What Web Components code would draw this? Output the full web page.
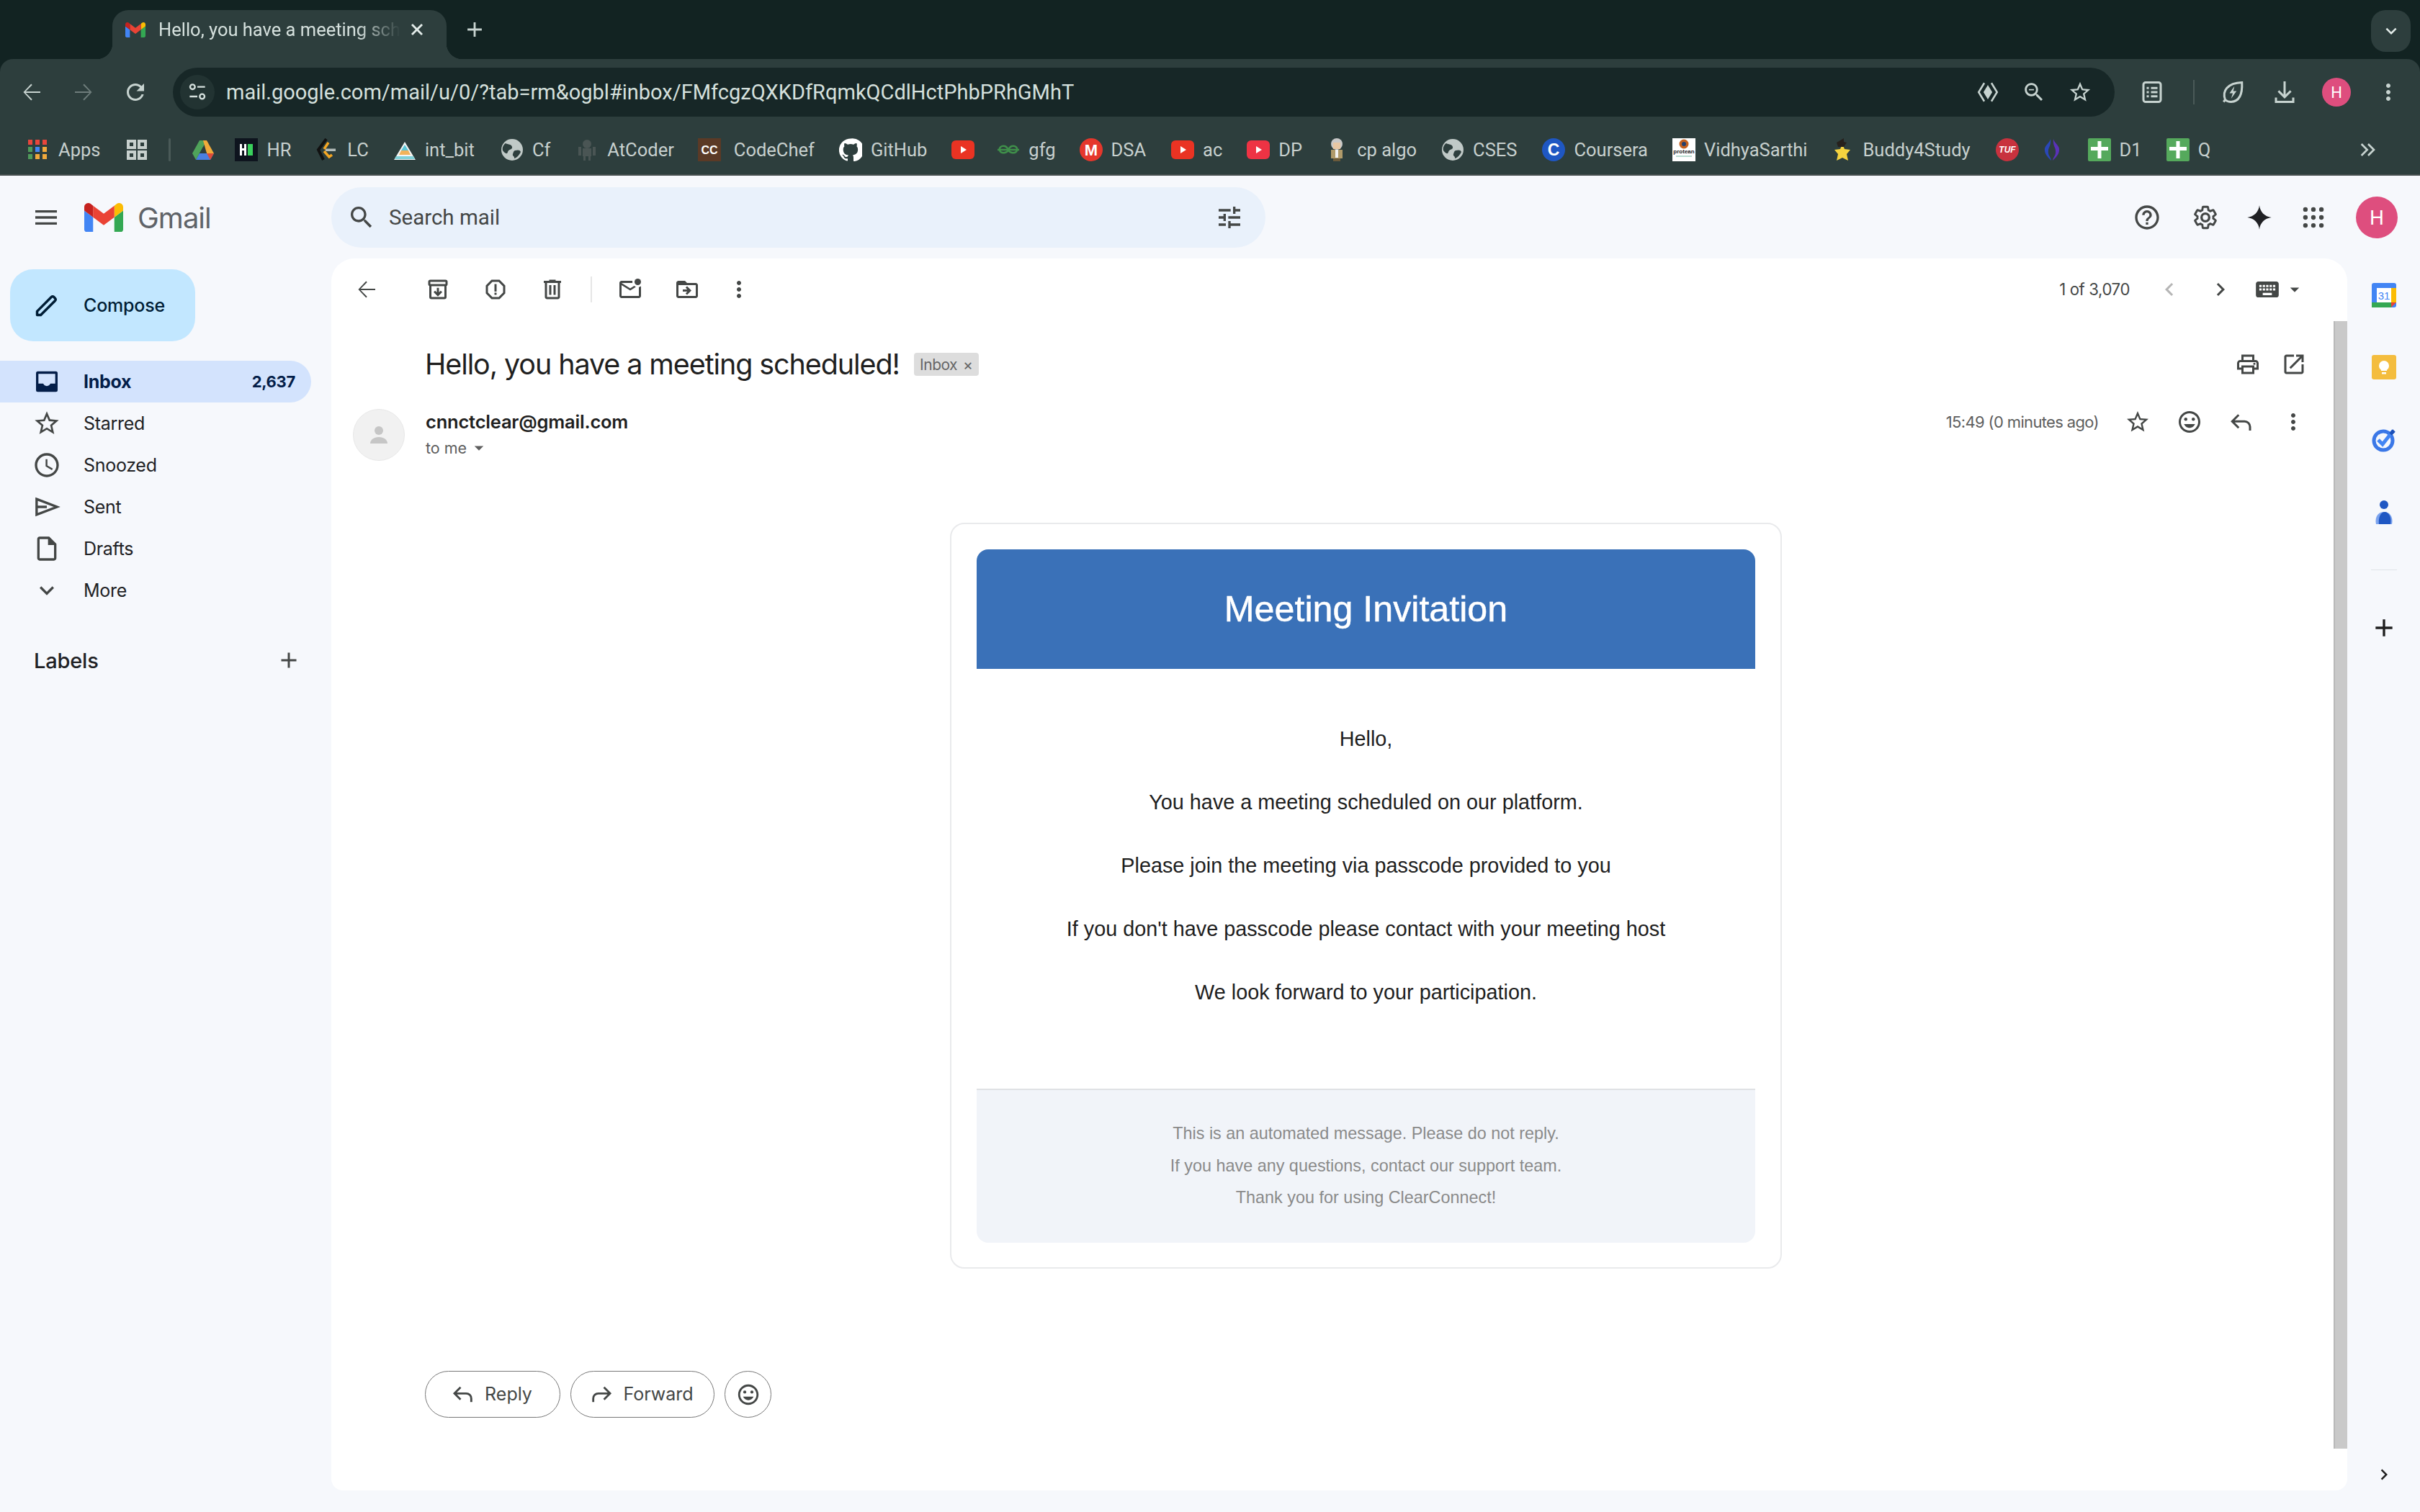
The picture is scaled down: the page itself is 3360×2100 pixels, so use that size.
<!DOCTYPE html>
<html lang="en">
<head>
<meta charset="utf-8">
<title>Gmail</title>
<style>
    html, body{ margin: 0; padding: 0; height: 100%; }
    body{ width: 3360px; height: 2100px; overflow: hidden; font-family: Roboto, "Liberation Sans", sans-serif; background: #f6f8fc; }
</style>
</head>
<body>
<chrome-frame></chrome-frame>
<gm-app></gm-app>

<script>
const ICONS = {
    back: '<path d="M20 11.300H6.500l6-6-1-1L4.300 12l7.200 7.700 1-1-6-6H20z"/>',
    forward: '<path d="M4 11.300h13.500l-6-6 1-1 7.200 7.700-7.200 7.700-1-1 6-6H4z"/>',
    refresh: '<path d="M17.650 6.350C16.200 4.900 14.210 4 12 4c-4.420 0-7.990 3.580-7.990 8s3.570 8 7.990 8c3.730 0 6.840-2.550 7.730-6h-2.080c-.82 2.330-3.040 4-5.650 4-3.310 0-6-2.690-6-6s2.690-6 6-6c1.660 0 3.140.69 4.220 1.780L13 11h7V4l-2.350 2.350z"/>',
    star: '<path d="M22 9.240l-7.190-.62L12 2 9.190 8.630 2 9.240l5.460 4.730L5.820 21 12 17.270 18.180 21l-1.630-7.030L22 9.240zM12 15.400l-3.760 2.270 1-4.280-3.320-2.880 4.380-.38L12 6.100l1.710 4.040 4.380.38-3.320 2.880 1 4.280L12 15.400z"/>',
    menu: '<path d="M3 18h18v-2H3v2zm0-5h18v-2H3v2zm0-7v2h18V6H3z"/>',
    search: '<path d="M15.500 14h-.79l-.28-.27C15.410 12.590 16 11.110 16 9.500 16 5.910 13.090 3 9.500 3S3 5.910 3 9.500 5.910 16 9.500 16c1.610 0 3.090-.59 4.230-1.570l.27.28v.79l5 4.990L20.490 19l-4.990-5zm-6 0C7.010 14 5 11.990 5 9.500S7.010 5 9.500 5 14 7.010 14 9.500 11.990 14 9.500 14z"/>',
    tune: '<path d="M3 17v2h6v-2H3zM3 5v2h10V5H3zm10 16v-2h8v-2h-8v-2h-2v6h2zM7 9v2H3v2h4v2h2V9H7zm14 4v-2H11v2h10zm-6-4h2V7h4V5h-4V3h-2v6z"/>',
    help: '<path d="M11 18h2v-2h-2v2zm1-16C6.480 2 2 6.480 2 12s4.480 10 10 10 10-4.480 10-10S17.520 2 12 2zm0 18c-4.410 0-8-3.590-8-8s3.590-8 8-8 8 3.590 8 8-3.590 8-8 8zm0-14c-2.210 0-4 1.790-4 4h2c0-1.100.9-2 2-2s2 .9 2 2c0 2-3 1.750-3 5h2c0-2.250 3-2.500 3-5 0-2.210-1.790-4-4-4z"/>',
    gear: '<g fill="none" stroke="currentColor" stroke-width="2"><path transform="translate(1.400 1.400) scale(.883)" d="M19.430 12.980c.04-.32.07-.64.07-.98s-.03-.66-.07-.98l2.110-1.650c.19-.15.24-.42.12-.64l-2-3.460c-.12-.22-.39-.3-.61-.22l-2.490 1c-.52-.4-1.080-.73-1.690-.98l-.38-2.650C14.460 2.180 14.250 2 14 2h-4c-.25 0-.46.18-.49.42l-.38 2.650c-.61.25-1.170.59-1.690.98l-2.490-1c-.23-.09-.49 0-.61.22l-2 3.460c-.13.22-.07.49.12.64l2.110 1.650c-.04.32-.07.65-.07.98s.03.66.07.98l-2.110 1.650c-.19.15-.24.42-.12.64l2 3.460c.12.22.39.3.61.22l2.490-1c.52.4 1.080.73 1.690.98l.38 2.650c.03.24.24.42.49.42h4c.25 0 .46-.18.49-.42l.38-2.650c.61-.25 1.170-.59 1.690-.98l2.490 1c.23.09.49 0 .61-.22l2-3.460c.12-.22.07-.49-.12-.64l-2.110-1.650z"/><circle cx="12" cy="12" r="3.200"/></g>',
    spark: '<path d="M12 2c.6 5.500 4.500 9.400 10 10-5.500.6-9.400 4.500-10 10-.6-5.500-4.500-9.400-10-10 5.500-.6 9.400-4.500 10-10z"/>',
    apps: '<g><circle cx="5" cy="5" r="2"/><circle cx="12" cy="5" r="2"/><circle cx="19" cy="5" r="2"/><circle cx="5" cy="12" r="2"/><circle cx="12" cy="12" r="2"/><circle cx="19" cy="12" r="2"/><circle cx="5" cy="19" r="2"/><circle cx="12" cy="19" r="2"/><circle cx="19" cy="19" r="2"/></g>',
    archive: '<g fill="none" stroke="currentColor" stroke-width="2"><path d="M5 8v11a1 1 0 0 0 1 1h12a1 1 0 0 0 1-1V8"/><rect x="4" y="4" width="16" height="4" rx="1"/></g><path d="M11 10.500h2v4.200l1.600-1.600 1.400 1.400-4 4-4-4 1.400-1.400 1.600 1.600z"/>',
    report: '<path d="M15.730 3H8.270L3 8.270v7.460L8.270 21h7.460L21 15.730V8.270L15.730 3zM19 14.900L14.900 19H9.100L5 14.900V9.100L9.100 5h5.800L19 9.100v5.800z"/><path d="M11 7h2v7h-2zM11 15h2v2h-2z"/>',
    trash: '<path d="M15 4V3H9v1H4v2h1v13c0 1.100.9 2 2 2h10c1.100 0 2-.9 2-2V6h1V4h-5zm2 15H7V6h10v13zM9 8h2v9H9zm4 0h2v9h-2z"/>',
    unread: '<path d="M22 8.980V18c0 1.100-.9 2-2 2H4c-1.100 0-2-.9-2-2V6c0-1.100.9-2 2-2h10.100c-.06.32-.1.66-.1 1s.04.68.1 1H4l8 5 3.670-2.290c.47.43 1.020.76 1.630.98L12 13 4 8v10h16V9.900c.74-.15 1.420-.48 2-.92z"/><circle cx="19" cy="5" r="3"/>',
    folder: '<path d="M20 6h-8l-2-2H4c-1.100 0-2 .9-2 2v12c0 1.100.9 2 2 2h16c1.100 0 2-.9 2-2V8c0-1.100-.9-2-2-2zm0 12H4V8h16v10zm-8.010-9l-1.410 1.410L12.160 12H8v2h4.160l-1.590 1.590L11.990 17 16 13.010 11.990 9z"/>',
    dots: '<path d="M12 8c1.100 0 2-.9 2-2s-.9-2-2-2-2 .9-2 2 .9 2 2 2zm0 2c-1.100 0-2 .9-2 2s.9 2 2 2 2-.9 2-2-.9-2-2-2zm0 6c-1.100 0-2 .9-2 2s.9 2 2 2 2-.9 2-2-.9-2-2-2z"/>',
    prev: '<path d="M15.410 7.410L14 6l-6 6 6 6 1.410-1.410L10.830 12z"/>',
    next: '<path d="M10 6L8.590 7.410 13.170 12l-4.580 4.590L10 18l6-6z"/>',
    keyboard: '<path d="M20 5H4c-1.100 0-1.990.9-1.990 2L2 17c0 1.100.9 2 2 2h16c1.100 0 2-.9 2-2V7c0-1.100-.9-2-2-2zm-9 3h2v2h-2V8zm0 3h2v2h-2v-2zM8 8h2v2H8V8zm0 3h2v2H8v-2zm-1 2H5v-2h2v2zm0-3H5V8h2v2zm9 7H8v-2h8v2zm0-4h-2v-2h2v2zm0-3h-2V8h2v2zm3 3h-2v-2h2v2zm0-3h-2V8h2v2z"/>',
    caret: '<path d="M7 10l5 5 5-5z"/>',
    print: '<path d="M19 8h-1V3H6v5H5c-1.660 0-3 1.340-3 3v6h4v4h12v-4h4v-6c0-1.660-1.340-3-3-3zM8 5h8v3H8V5zm8 12v2H8v-4h8v2zm2-2v-2H6v2H4v-4c0-.55.45-1 1-1h14c.55 0 1 .45 1 1v4h-2z"/><circle cx="18" cy="11.500" r="1"/>',
    external: '<path d="M19 19H5V5h7V3H5c-1.110 0-2 .9-2 2v14c0 1.100.89 2 2 2h14c1.100 0 2-.9 2-2v-7h-2v7zM14 3v2h3.590l-9.830 9.830 1.410 1.410L19 6.410V10h2V3h-7z"/>',
    smile: '<path d="M11.990 2C6.470 2 2 6.480 2 12s4.470 10 9.990 10C17.520 22 22 17.520 22 12S17.520 2 11.990 2zM12 20c-4.420 0-8-3.580-8-8s3.580-8 8-8 8 3.580 8 8-3.580 8-8 8z"/><circle cx="8.500" cy="9.500" r="1.500"/><circle cx="15.500" cy="9.500" r="1.500"/><path d="M12 17.500c2.330 0 4.310-1.460 5.110-3.500H6.890c.8 2.040 2.780 3.500 5.110 3.500z"/>',
    reply: '<path fill="none" stroke="currentColor" stroke-width="2" d="M9.500 5.500L3.500 11.500l6 6M3.500 11.500H15a5 5 0 0 1 5 5V20"/>',
    fwd: '<path fill="none" stroke="currentColor" stroke-width="2" d="M14.500 5.500l6 6-6 6M20.500 11.500H9a5 5 0 0 0-5 5V20"/>',
    inbox: '<rect x="3" y="3.500" width="18" height="17" rx="1.500" fill="#041e49"/><path d="M5 5.500h14v8.200h-4c-.5 1.200-1.700 2-3 2s-2.500-.8-3-2H5z" fill="#d3e3fd"/>',
    clock: '<path d="M11.990 2C6.470 2 2 6.480 2 12s4.470 10 9.990 10C17.520 22 22 17.520 22 12S17.520 2 11.990 2zM12 20c-4.420 0-8-3.580-8-8s3.580-8 8-8 8 3.580 8 8-3.580 8-8 8z"/><path d="M12.500 7H11v6l5.250 3.150.75-1.230-4.500-2.670z"/>',
    sent: '<path fill="none" stroke="currentColor" stroke-width="2" d="M3.500 5.500L20.500 12 3.500 18.500zM3.500 12H12"/>',
    draft: '<path d="M14 2H6c-1.100 0-1.990.9-1.990 2L4 20c0 1.100.89 2 1.990 2H18c1.100 0 2-.9 2-2V8l-6-6zM6 20V4h7v5h5v11H6z"/>',
    more: '<path d="M16.590 8.590L12 13.170 7.410 8.590 6 10l6 6 6-6z"/>',
    plus: '<path d="M19 13h-6v6h-2v-6H5v-2h6V5h2v6h6v2z"/>',
    pen: '<path fill="none" stroke="currentColor" stroke-width="2.200" stroke-linejoin="round" d="M3.500 20.500v-3.200L16 4.800a1.600 1.600 0 0 1 2.200 0l1 1a1.600 1.600 0 0 1 0 2.200L6.700 20.500z"/>',
    person: '<circle cx="12" cy="8" r="4"/><path d="M4 20c0-3.500 3.500-6 8-6s8 2.500 8 6z"/>',
    lens: '<path d="M8.500 3L3 12l5.500 9M15.500 3L21 12l-5.500 9" fill="none" stroke="currentColor" stroke-width="1.800"/><path d="M12 5l4.300 7-4.300 7-4.300-7z"/>',
    zoomout: '<path d="M15.500 14h-.79l-.28-.27C15.410 12.590 16 11.110 16 9.500 16 5.910 13.090 3 9.500 3S3 5.910 3 9.500 5.910 16 9.500 16c1.610 0 3.090-.59 4.230-1.570l.27.28v.79l5 4.990L20.490 19l-4.990-5zm-6 0C7.010 14 5 11.990 5 9.500S7.010 5 9.500 5 14 7.010 14 9.500 11.990 14 9.500 14z"/><path d="M7 9h5v1.200H7z"/>',
    reading: '<rect x="4" y="3" width="16" height="18" rx="2" fill="none" stroke="currentColor" stroke-width="2"/><path d="M7 7.200h2v2H7zM11 7.200h6v2h-6zM7 11h2v2H7zM11 11h6v2h-6zM7 14.800h2v2H7zM11 14.800h6v2h-6z"/>',
    leaf: '<path fill="none" stroke="currentColor" stroke-width="2" d="M5 19C2 11 7 3.500 20.500 3c.5 9-1.500 17.500-10 18-2.200 0-4-.5-5.500-2zM5 19l-1.500 2"/><path d="M13.500 6.500L9 13h3l-1.500 5 5-7h-3z"/>',
    download: '<path d="M11 2h2v12.200l4-4 1.400 1.400L12 18l-6.400-6.400L7 10.200l4 4z"/><path d="M3 17h2v3h14v-3h2v5H3z"/>',
    tabopts: '<circle cx="7" cy="6.500" r="2.500" fill="none" stroke="currentColor" stroke-width="1.800"/><path d="M12 5.600h8v1.800h-8zM4 15.600h8v1.800H4z"/><circle cx="17" cy="16.500" r="2.500" fill="none" stroke="currentColor" stroke-width="1.800"/>',
    chevrons: '<path fill="none" stroke="currentColor" stroke-width="2" d="M5 6l6 6-6 6M12 6l6 6-6 6"/>'
};

class GmIcon extends HTMLElement{
    constructor(){
        super();
        this.attachShadow({mode: 'open'});
    }
    connectedCallback(){
        const size = this.getAttribute('size') || 40;
        const name = this.getAttribute('name');
        this.shadowRoot.innerHTML = `
            <style>
                :host{ display: inline-flex; width: ${size}px; height: ${size}px; flex: none; color: inherit; }
                svg{ width: 100%; height: 100%; display: block; fill: currentColor; }
            </style>
            <svg viewBox="0 0 24 24">${ICONS[name] || ''}</svg>
        `;
    }
}
customElements.define('gm-icon', GmIcon);

class GmailM extends HTMLElement{
    constructor(){
        super();
        this.attachShadow({mode: 'open'});
    }
    connectedCallback(){
        const w = this.getAttribute('width') || 54;
        this.shadowRoot.innerHTML = `
            <style>:host{ display: inline-flex; flex: none; } svg{ display: block; width: ${w}px; }</style>
            <svg viewBox="52 42 88 66">
                <path fill="#4285f4" d="M58 108h14V74L52 59v43c0 3.320 2.690 6 6 6"/>
                <path fill="#34a853" d="M120 108h14c3.320 0 6-2.690 6-6V59l-20 15"/>
                <path fill="#fbbc04" d="M120 48v26l20-15v-8c0-7.420-8.470-11.650-14.400-7.200"/>
                <path fill="#ea4335" d="M72 74V48l24 18 24-18v26L96 92"/>
                <path fill="#c5221f" d="M52 51v8l20 15V48l-5.600-4.200c-5.940-4.450-14.400-.22-14.400 7.200"/>
            </svg>
        `;
    }
}
customElements.define('gmail-m', GmailM);

// bookmark favicons, all on a 32 box
const FAVICONS = {
    apps: '<g><rect x="3" y="2" width="6" height="7" fill="#e8453c"/><rect x="13" y="2" width="6" height="7" fill="#e8453c"/><rect x="23" y="2" width="6" height="7" fill="#e8453c"/><rect x="3" y="12" width="6" height="7" fill="#4f9a5a"/><rect x="13" y="12" width="6" height="7" fill="#4285f4"/><rect x="23" y="12" width="6" height="7" fill="#f0a93c"/><rect x="3" y="22" width="6" height="7" fill="#4f9a5a"/><rect x="13" y="22" width="6" height="7" fill="#f0a93c"/><rect x="23" y="22" width="6" height="7" fill="#f0a93c"/></g>',
    grid: '<g fill="none" stroke="#c7d0ce" stroke-width="4"><rect x="4" y="4" width="9" height="9"/><rect x="19" y="4" width="9" height="9"/><rect x="4" y="19" width="9" height="9"/><rect x="19" y="19" width="9" height="9"/></g>',
    drive: '<path d="M1 21L11 3h5l5 0-5 9-10 18z" fill="#4fa35a"/><path d="M16 3h5l10 18H21z" fill="#f0ab3a"/><path d="M11 21h20l-5 9H6z" fill="#4a7fe0"/><path d="M21 21h10l-5 9z" fill="#dd4b39"/><path d="M16 12l5 9H11z" fill="#2d3e3d"/>',
    hr: '<rect width="32" height="32" fill="#0e141e"/><path d="M7 8h3v6h3V8h3v16h-3v-7h-3v7H7z" fill="#fff"/><rect x="18" y="8" width="7" height="16" fill="#39d05c"/>',
    lc: '<path d="M15 1L4 16l7 14" fill="none" stroke="#111" stroke-width="4"/><path d="M18 6l-6 9M12 18l7 8 4-3" fill="none" stroke="#f5a623" stroke-width="3.500"/><rect x="14" y="14.500" width="14" height="3.500" fill="#b3bcba"/>',
    intbit: '<path d="M16 5L31 30H1z" fill="#f5f5f5"/><path d="M16 9l5 8H11z" fill="#5cc5d6"/><path d="M11 17h10l3 6H8z" fill="#f1b35a"/><path d="M4 25h24l2 4H2z" fill="#7fd0d8"/>',
    globe: '<circle cx="16" cy="16" r="15" fill="#c0c9c7"/><path d="M7 7c4 2 8 1 9 5s-5 3-6 7-4 2-7-2c-1-4 1-8 4-10zM20 17c4-1 7-1 8 2-2 4-5 8-9 9 1-3-3-3-2-6s1-4 3-5z" fill="#2d3e3d"/>',
    atcoder: '<g fill="#4a5554"><circle cx="16" cy="8" r="6"/><rect x="10" y="14" width="12" height="11"/><rect x="4" y="12" width="4" height="12"/><rect x="24" y="12" width="4" height="12"/><rect x="11" y="25" width="3" height="6"/><rect x="18" y="25" width="3" height="6"/></g>',
    cc: '<rect width="32" height="32" fill="#5b3a26"/><text x="16" y="22" font-family="Liberation Sans" font-weight="700" font-size="16" text-anchor="middle" fill="#fff">CC</text>',
    github: '<path transform="scale(1.333)" fill="#fff" d="M12 .3a12 12 0 0 0-3.800 23.400c.6.1.8-.3.8-.6v-2c-3.300.7-4-1.600-4-1.600-.6-1.400-1.400-1.800-1.400-1.800-1-.7.1-.7.1-.7 1.200.1 1.800 1.200 1.800 1.200 1 1.800 2.800 1.300 3.500 1 .1-.8.4-1.300.8-1.600-2.700-.3-5.500-1.300-5.500-6 0-1.200.5-2.300 1.300-3.100-.2-.4-.6-1.600 0-3.200 0 0 1-.3 3.400 1.200a11.500 11.500 0 0 1 6 0c2.300-1.500 3.300-1.200 3.300-1.200.6 1.600.2 2.800 0 3.200.9.8 1.300 1.900 1.300 3.200 0 4.600-2.800 5.600-5.500 5.900.5.4.9 1.200.9 2.400v3.500c0 .3.2.7.8.6A12 12 0 0 0 12 .3z"/>',
    yt: '<rect y="3" width="32" height="26" rx="6" fill="#ea3323"/><path d="M13 11l8 5-8 5z" fill="#fff"/>',
    ytp: '<rect y="3" width="32" height="26" rx="6" fill="#ee3344"/><path d="M13 11l8 5-8 5z" fill="#fff"/>',
    gfg: '<g fill="none" stroke="#3f8f4a" stroke-width="2.500"><path d="M1 16h30"/><path d="M16 16c-2 5-10 6-12 1-1-4 2-7 7-6 2 .4 3 1 5 5z"/><path d="M16 16c2 5 10 6 12 1 1-4-2-7-7-6-2 .4-3 1-5 5z"/></g>',
    dsa: '<circle cx="16" cy="16" r="16" fill="#e5372c"/><text x="16" y="24" font-family="Liberation Sans" font-weight="700" font-size="22" text-anchor="middle" fill="#fff">M</text>',
    cpalgo: '<circle cx="16" cy="8" r="8" fill="#c9c9c9"/><rect x="11" y="6" width="10" height="9" fill="#e7c7a4"/><rect x="8" y="16" width="16" height="12" fill="#b09a6a"/><rect x="14" y="16" width="4" height="11" fill="#f2f2f2"/><rect x="11" y="28" width="10" height="4" fill="#6b5a3b"/>',
    coursera: '<circle cx="16" cy="16" r="16" fill="#1f57c3"/><text x="16" y="24" font-family="Liberation Sans" font-weight="700" font-size="23" text-anchor="middle" fill="#fff">C</text>',
    protean: '<rect width="32" height="32" fill="#fff"/><circle cx="16" cy="8" r="6.500" fill="#c4611f"/><circle cx="16" cy="8" r="3" fill="#26406e"/><text x="16" y="21" font-family="Liberation Sans" font-size="8" font-weight="700" text-anchor="middle" fill="#222">protean</text><rect x="5" y="24" width="22" height="2" fill="#b8dcd0"/>',
    buddy: '<path d="M16 8l3 7 8 1-5 6 2 9-8-4-8 4 2-9-5-6 8-1z" fill="#f5d33f"/><path d="M8 6l10-6v5l4 1-4 6H10z" fill="#26201c"/>',
    tuf: '<circle cx="16" cy="16" r="16" fill="#c8323e"/><text x="16" y="20" font-family="Liberation Sans" font-weight="700" font-style="italic" font-size="12" text-anchor="middle" fill="#fff">TUF</text>',
    code: '<path d="M14 1C12 8 5 10 6 17c.5 6 5 10 9 14-1-6-5-7-4-14 0-4 4-7 3-16z" fill="#2a47b8"/><path d="M18 1c2 7 9 9 8 16-.5 6-5 10-9 14 1-6 5-7 4-14 0-4-4-7-3-16z" fill="#5a32b8"/>',
    sheet: '<rect width="32" height="32" rx="2" fill="#55a95c"/><path d="M13.500 4h5v8H28v5h-9.500v11h-5V17H4v-5h9.500z" fill="#fff"/>'
};

class BmItem extends HTMLElement{
    constructor(){
        super();
        this.attachShadow({mode: 'open'});
    }
    connectedCallback(){
        const label = this.getAttribute('label') || '';
        const icon = this.getAttribute('icon');
        const left = this.getAttribute('left') || 0;
        this.shadowRoot.innerHTML = `
            <style>
                :host{ display: flex; align-items: center; gap: 12px; flex: none; margin-left: ${left}px; height: 34px; }
                svg{ width: 32px; height: 32px; display: block; flex: none; }
                span{ font: 400 25.500px/32px Roboto, sans-serif; color: #c7d0ce; white-space: nowrap; }
            </style>
            <svg viewBox="0 0 32 32">${FAVICONS[icon] || ''}</svg>
            ${label ? `<span>${label}</span>` : ''}
        `;
    }
}
customElements.define('bm-item', BmItem);

class ChromeFrame extends HTMLElement{
    constructor(){
        super();
        this.attachShadow({mode: 'open'});
    }
    getStyle(){
        return `
            <style>
                :host{ display: block; height: 244px; background: #122322; color: #c7d3d0; font-family: Roboto, sans-serif; }
                .tabs{ height: 82px; display: flex; align-items: flex-end; padding-left: 156px; box-sizing: border-box; }
                .tab{ position: relative; width: 464px; height: 68px; background: #2d3e3d; border-radius: 22px 22px 0 0; display: flex; align-items: center; padding: 0 0 14px 18px; box-sizing: border-box; }
                .tab::before, .tab::after{ content: ''; position: absolute; bottom: 0; width: 22px; height: 22px; }
                .tab::before{ left: -22px; background: radial-gradient(circle at 0 0, #122322 22px, #2d3e3d 22.500px); }
                .tab::after{ right: -22px; background: radial-gradient(circle at 100% 0, #122322 22px, #2d3e3d 22.500px); }
                .title{ margin-left: 18px; width: 336px; flex: none; overflow: hidden; white-space: nowrap; font-size: 25.500px; color: #d5e0dd;
                    -webkit-mask-image: linear-gradient(90deg, #000 82%, transparent 100%); mask-image: linear-gradient(90deg, #000 82%, transparent 100%); }
                .tab gm-icon.x{ margin-left: 6px; color: #e3ecea; }
                .newtab{ margin: 0 0 24px 22px; color: #c7d3d0; }
                .tabs .list{ margin: 0 13px 10px auto; width: 55px; height: 58px; border-radius: 20px; background: #2d3e3d; display: flex; align-items: center; justify-content: center; color: #e3ecea; }
                .tool{ height: 90px; background: #2d3e3d; border-radius: 18px 18px 0 0; display: flex; align-items: flex-start; }
                .tool > gm-icon{ margin-top: 28px; }
                .omni{ margin: 12px 0 0 34px; width: 2696px; height: 68px; border-radius: 34px; background: #172727; display: flex; align-items: center; box-sizing: border-box; padding: 0 31px 0 10px; }
                .site{ width: 48px; height: 48px; border-radius: 50%; background: #223332; display: flex; align-items: center; justify-content: center; flex: none; color: #d5e0dd; }
                .url{ margin-left: 16px; font-size: 29px; color: #d5e0dd; white-space: nowrap; flex: 1; }
                .omni gm-icon{ margin-left: 30px; }
                .sep{ width: 2px; height: 34px; background: #4a5a58; margin: 29px 0 0 39px; }
                .avatar{ margin: 26px 0 0 34px; width: 40px; height: 40px; border-radius: 50%; background: #de4e7e; color: #fff; font-size: 22px; display: flex; align-items: center; justify-content: center; }
                .marks{ height: 72px; background: #2d3e3d; display: flex; align-items: center; padding: 2px 0 0 36px; box-sizing: border-box; border-bottom: 2px solid #474f4f; }
                .more{ margin-left: auto; margin-right: 56px; }
            </style>
        `;
    }
    getTemplate(){
        const template = document.createElement('template');
        template.innerHTML = `
            <div class="tabs">
                <div class="tab">
                    <gmail-m width="28"></gmail-m>
                    <span class="title">Hello, you have a meeting scheduled!</span>
                    <gm-icon class="x" name="plus" size="34" style="transform: rotate(45deg)"></gm-icon>
                </div>
                <gm-icon class="newtab" name="plus" size="34"></gm-icon>
                <div class="list"><gm-icon name="more" size="30"></gm-icon></div>
            </div>
            <div class="tool">
                <gm-icon name="back" size="36" style="margin-left:26px"></gm-icon>
                <gm-icon name="forward" size="36" style="margin-left:36px;color:#6e7d7b"></gm-icon>
                <gm-icon name="refresh" size="36" style="margin-left:36px"></gm-icon>
                <div class="omni">
                    <div class="site"><gm-icon name="tabopts" size="32" style="margin-left:0"></gm-icon></div>
                    <span class="url">mail.google.com/mail/u/0/?tab=rm&amp;ogbl#inbox/FMfcgzQXKDfRqmkQCdlHctPhbPRhGMhT</span>
                    <gm-icon name="lens" size="34"></gm-icon>
                    <gm-icon name="zoomout" size="34"></gm-icon>
                    <gm-icon name="star" size="34"></gm-icon>
                </div>
                <gm-icon name="reading" size="36" style="margin-left:34px"></gm-icon>
                <div class="sep"></div>
                <gm-icon name="leaf" size="36" style="margin-left:35px"></gm-icon>
                <gm-icon name="download" size="36" style="margin-left:36px"></gm-icon>
                <div class="avatar">H</div>
                <gm-icon name="dots" size="36" style="margin-left:34px"></gm-icon>
            </div>
            <div class="marks">
                <bm-item icon="apps" label="Apps" style="gap:13px"></bm-item>
                <bm-item icon="grid" left="35"></bm-item>
                <div style="width:3px;height:32px;border-radius:2px;background:#4a5a58;margin-left:28px"></div>
                <bm-item icon="drive" left="29"></bm-item>
                <bm-item icon="hr" label="HR" left="28"></bm-item>
                <bm-item icon="lc" label="LC" left="34"></bm-item>
                <bm-item icon="intbit" label="int_bit" left="34"></bm-item>
                <bm-item icon="globe" label="Cf" left="36"></bm-item>
                <bm-item icon="atcoder" label="AtCoder" left="35"></bm-item>
                <bm-item icon="cc" label="CodeChef" left="33" style="gap:18px"></bm-item>
                <bm-item icon="github" label="GitHub" left="34"></bm-item>
                <bm-item icon="yt" left="34"></bm-item>
                <bm-item icon="gfg" label="gfg" left="31"></bm-item>
                <bm-item icon="dsa" label="DSA" left="33"></bm-item>
                <bm-item icon="yt" label="ac" left="35"></bm-item>
                <bm-item icon="ytp" label="DP" left="34"></bm-item>
                <bm-item icon="cpalgo" label="cp algo" left="32"></bm-item>
                <bm-item icon="globe" label="CSES" left="34"></bm-item>
                <bm-item icon="coursera" label="Coursera" left="35"></bm-item>
                <bm-item icon="protean" label="VidhyaSarthi" left="34"></bm-item>
                <bm-item icon="buddy" label="Buddy4Study" left="33"></bm-item>
                <bm-item icon="tuf" left="35"></bm-item>
                <bm-item icon="code" left="30"></bm-item>
                <bm-item icon="sheet" label="D1" left="34"></bm-item>
                <bm-item icon="sheet" label="Q" left="34"></bm-item>
                <gm-icon class="more" name="chevrons" size="32"></gm-icon>
            </div>
            ${this.getStyle()}
        `;
        return template;
    }
    connectedCallback(){
        this.shadowRoot.appendChild(this.getTemplate().content.cloneNode(true));
    }
}
customElements.define('chrome-frame', ChromeFrame);

class NavItem extends HTMLElement{
    constructor(){
        super();
        this.attachShadow({mode: 'open'});
    }
    connectedCallback(){
        const active = this.hasAttribute('active');
        const count = this.getAttribute('count');
        this.shadowRoot.innerHTML = `
            <style>
                :host{ display: flex; align-items: center; height: 58px; width: 432px; box-sizing: border-box; padding: 0 22px 0 45px; border-radius: 0 29px 29px 0; color: #444746;
                    font: 400 25px Inter, Roboto, sans-serif; letter-spacing: -0.3px; background: ${active ? '#d3e3fd' : 'none'}; }
                .label{ margin-left: 31px; flex: 1; color: ${active ? '#041e49' : '#202124'}; font-weight: ${active ? 700 : 400}; }
                .count{ color: #041e49; font-weight: 700; font-size: 22px; }
            </style>
            <gm-icon name="${this.getAttribute('icon')}" size="40"></gm-icon>
            <span class="label"><slot></slot></span>
            ${count ? `<span class="count">${count}</span>` : ''}
        `;
    }
}
customElements.define('nav-item', NavItem);

class GmSidebar extends HTMLElement{
    constructor(){
        super();
        this.attachShadow({mode: 'open'});
    }
    connectedCallback(){
        this.shadowRoot.innerHTML = `
            <style>
                :host{ display: block; width: 460px; flex: none; }
                .compose{ margin: 15px 0 0 14px; width: 257px; height: 100px; border-radius: 32px; background: #c2e7ff; display: flex; align-items: center; padding-left: 32px; box-sizing: border-box; color: #001d35; font: 500 25px Inter, Roboto, sans-serif; letter-spacing: -0.2px; }
                .compose span{ margin-left: 32px; }
                nav{ margin-top: 27px; }
                .labels{ margin: 48px 0 0 47px; width: 372px; display: flex; align-items: center; justify-content: space-between; font: 500 29px Inter, Roboto, sans-serif; letter-spacing: -0.2px; color: #202124; height: 40px; }
                .labels gm-icon{ color: #444746; }
            </style>
            <div class="compose"><gm-icon name="pen" size="38"></gm-icon><span>Compose</span></div>
            <nav>
                <nav-item icon="inbox" count="2,637" active>Inbox</nav-item>
                <nav-item icon="star">Starred</nav-item>
                <nav-item icon="clock">Snoozed</nav-item>
                <nav-item icon="sent">Sent</nav-item>
                <nav-item icon="draft">Drafts</nav-item>
                <nav-item icon="more">More</nav-item>
            </nav>
            <div class="labels"><span>Labels</span><gm-icon name="plus" size="36"></gm-icon></div>
        `;
    }
}
customElements.define('gm-sidebar', GmSidebar);

class GmHeader extends HTMLElement{
    constructor(){
        super();
        this.attachShadow({mode: 'open'});
    }
    connectedCallback(){
        this.shadowRoot.innerHTML = `
            <style>
                :host{ display: flex; height: 115px; flex: none; box-sizing: border-box; padding-top: 4px; color: #444746; font-family: Roboto, sans-serif; }
                .brand{ width: 460px; flex: none; display: flex; align-items: center; padding: 0 0 0 44px; box-sizing: border-box; height: 108px; }
                .word{ margin-left: 20px; font: 400 40px Inter, sans-serif; letter-spacing: -1px; color: #5f6368; }
                .search{ margin-top: 12px; width: 1297px; height: 84px; border-radius: 42px; background: #e9f1fb; display: flex; align-items: center; padding: 0 30px 0 22px; box-sizing: border-box; }
                .search span{ margin-left: 18px; flex: 1; font-size: 29.500px; color: #444746; }
                .right{ margin-left: auto; display: flex; align-items: center; height: 108px; padding-right: 31px; }
                .avatar{ margin-left: 40px; width: 58px; height: 58px; border-radius: 50%; background: #de4e7e; color: #fff; font-size: 28px; display: flex; align-items: center; justify-content: center; }
            </style>
            <div class="brand">
                <gm-icon name="menu" size="40"></gm-icon>
                <gmail-m width="54" style="margin-left:33px"></gmail-m>
                <span class="word">Gmail</span>
            </div>
            <div class="search">
                <gm-icon name="search" size="40"></gm-icon>
                <span>Search mail</span>
                <gm-icon name="tune" size="40"></gm-icon>
            </div>
            <div class="right">
                <gm-icon name="help" size="40"></gm-icon>
                <gm-icon name="gear" size="40" style="margin-left:41px"></gm-icon>
                <gm-icon name="spark" size="40" style="margin-left:35px;color:#202124"></gm-icon>
                <gm-icon name="apps" size="38" style="margin-left:36px"></gm-icon>
                <div class="avatar">H</div>
            </div>
        `;
    }
}
customElements.define('gm-header', GmHeader);

class InviteCard extends HTMLElement{
    constructor(){
        super();
        this.attachShadow({mode: 'open'});
    }
    connectedCallback(){
        this.shadowRoot.innerHTML = `
            <style>
                :host{ display: block; width: 1155px; height: 1036px; flex: none; box-sizing: border-box; border: 2px solid #e9eaec; border-radius: 20px; padding: 35px 35px 36px; font-family: "Liberation Sans", Arial, sans-serif; background: #fff; }
                .head{ height: 166px; background: #3a71b8; border-radius: 16px 16px 0 0; display: flex; align-items: center; justify-content: center; color: #fff; font-size: 50.200px; -webkit-text-stroke: .5px #fff; }
                .body{ height: 583px; box-sizing: border-box; padding-top: 77px; text-align: center; color: #202020; font-size: 28.800px; line-height: 40px; }
                .body p{ margin: 0 0 48px; }
                .foot{ height: 214px; box-sizing: border-box; border-top: 2px solid #dfe1e4; background: #f1f4f9; border-radius: 0 0 16px 16px; padding-top: 38px; text-align: center; color: #8a8a8a; font-size: 23.400px; line-height: 44.500px; }
            </style>
            <div class="head">Meeting Invitation</div>
            <div class="body">
                <p>Hello,</p>
                <p>You have a meeting scheduled on our platform.</p>
                <p>Please join the meeting via passcode provided to you</p>
                <p>If you don't have passcode please contact with your meeting host</p>
                <p>We look forward to your participation.</p>
            </div>
            <div class="foot">
                <div>This is an automated message. Please do not reply.</div>
                <div>If you have any questions, contact our support team.</div>
                <div>Thank you for using ClearConnect!</div>
            </div>
        `;
    }
}
customElements.define('invite-card', InviteCard);

class MailThread extends HTMLElement{
    constructor(){
        super();
        this.attachShadow({mode: 'open'});
    }
    connectedCallback(){
        this.shadowRoot.innerHTML = `
            <style>
                :host{ display: flex; flex-direction: column; width: 2799px; height: 1711px; flex: none; background: #fff; border-radius: 32px 32px 16px 16px; overflow: hidden; color: #444746; font-family: Inter, Roboto, sans-serif; }
                .bar{ height: 87px; flex: none; display: flex; align-items: center; box-sizing: border-box; padding-bottom: 2px; }
                .bar gm-icon{ flex: none; }
                .vr{ width: 2px; height: 36px; background: #e6e6e6; }
                .count{ font-size: 22.200px; letter-spacing: -0.4px; color: #444746; margin-left: auto; }
                .scroll{ flex: 1; display: flex; min-height: 0; }
                .view{ flex: 1; min-width: 0; }
                .track{ width: 19px; flex: none; height: 1566px; background: #c9c9c9; border-left: 2px solid #b9b9b9; box-sizing: border-box; }
                .subject{ height: 120px; display: flex; align-items: center; padding-left: 130px; }
                h1{ margin: 0; font: 400 39.500px Inter, Roboto, sans-serif; letter-spacing: -1.100px; color: #1f1f1f; }
                .chip{ margin-left: 20px; width: 90px; height: 32px; box-sizing: border-box; border-radius: 4px; background: #dddddd; color: #666; font-size: 21px; letter-spacing: -0.5px; display: flex; align-items: center; justify-content: center; gap: 8px; }
                .tools{ margin-left: auto; display: flex; align-items: center; padding-right: 37px; }
                .sender{ height: 160px; display: flex; align-items: flex-start; padding: 2px 38px 0 30px; box-sizing: border-box; }
                .pic{ width: 72px; height: 72px; border-radius: 50%; background: #f1f1f1; border: 1px solid #e8e8e8; box-sizing: border-box; display: flex; align-items: center; justify-content: center; color: #c6c6c6; flex: none; }
                .who{ margin-left: 29px; }
                .name{ font-size: 25.500px; font-weight: 600; color: #1f1f1f; line-height: 36px; letter-spacing: -0.2px; }
                .to{ font-size: 21.500px; color: #5e5e5e; line-height: 36px; display: flex; align-items: center; }
                .time{ margin-left: auto; font-size: 22px; letter-spacing: -0.650px; color: #5e5e5e; line-height: 36px; }
                .acts{ display: flex; align-items: center; height: 36px; margin-left: 36px; }
                .acts gm-icon{ margin-right: 36px; }
                .acts gm-icon:last-child{ margin-right: 0; }
                .msg{ display: flex; justify-content: center; padding: 0 37px 0 130px; }
                .btns{ margin: 142px 0 0 130px; display: flex; gap: 14px; }
                .btn{ height: 65px; box-sizing: border-box; border: 1.500px solid #777; border-radius: 33px; display: flex; align-items: center; justify-content: center; gap: 13px; font-size: 25px; color: #444746; padding: 0 3px 2px 0; }
            </style>
            <div class="bar">
                <gm-icon name="back" size="36" style="margin-left:31px"></gm-icon>
                <gm-icon name="archive" size="36" style="margin-left:63px"></gm-icon>
                <gm-icon name="report" size="36" style="margin-left:44px"></gm-icon>
                <gm-icon name="trash" size="36" style="margin-left:43px"></gm-icon>
                <div class="vr" style="margin-left:35px"></div>
                <gm-icon name="unread" size="36" style="margin-left:35px"></gm-icon>
                <gm-icon name="folder" size="36" style="margin-left:43px"></gm-icon>
                <gm-icon name="dots" size="36" style="margin-left:36px"></gm-icon>
                <span class="count">1 of 3,070</span>
                <gm-icon name="prev" size="36" style="margin-left:37px;color:#b5b5b5"></gm-icon>
                <gm-icon name="next" size="36" style="margin-left:35px"></gm-icon>
                <gm-icon name="keyboard" size="38" style="margin-left:28px"></gm-icon>
                <gm-icon name="caret" size="30" style="margin:0 58px 0 4px"></gm-icon>
            </div>
            <div class="scroll">
                <div class="view">
                    <div class="subject">
                        <h1>Hello, you have a meeting scheduled!</h1>
                        <div class="chip"><span>Inbox</span><span>×</span></div>
                        <div class="tools">
                            <gm-icon name="print" size="36"></gm-icon>
                            <gm-icon name="external" size="36" style="margin-left:28px"></gm-icon>
                        </div>
                    </div>
                    <div class="sender">
                        <div class="pic"><gm-icon name="person" size="36"></gm-icon></div>
                        <div class="who">
                            <div class="name">cnnctclear@gmail.com</div>
                            <div class="to">to me <gm-icon name="caret" size="30" style="margin-left:2px"></gm-icon></div>
                        </div>
                        <span class="time">15:49 (0 minutes ago)</span>
                        <div class="acts">
                            <gm-icon name="star" size="36"></gm-icon>
                            <gm-icon name="smile" size="36"></gm-icon>
                            <gm-icon name="reply" size="36"></gm-icon>
                            <gm-icon name="dots" size="36"></gm-icon>
                        </div>
                    </div>
                    <div class="msg"><invite-card></invite-card></div>
                    <div class="btns">
                        <div class="btn" style="width:188px"><gm-icon name="reply" size="34"></gm-icon><span>Reply</span></div>
                        <div class="btn" style="width:200px"><gm-icon name="fwd" size="34"></gm-icon><span>Forward</span></div>
                        <div class="btn" style="width:65px;padding:0"><gm-icon name="smile" size="34"></gm-icon></div>
                    </div>
                </div>
                <div class="track"></div>
            </div>
        `;
    }
}
customElements.define('mail-thread', MailThread);

class SideRail extends HTMLElement{
    constructor(){
        super();
        this.attachShadow({mode: 'open'});
    }
    connectedCallback(){
        this.shadowRoot.innerHTML = `
            <style>
                :host{ display: flex; flex-direction: column; align-items: center; width: 101px; flex: none; height: 1711px; }
                svg{ display: block; flex: none; }
                .rule{ width: 36px; height: 1px; background: #dfe3e8; }
            </style>
            <svg width="34" height="34" viewBox="0 0 34 34" style="margin-top:34px">
                <rect width="34" height="34" rx="3" fill="#4285f4"/>
                <rect x="7" y="7" width="20" height="20" fill="#fff"/>
                <rect x="27" y="7" width="7" height="20" fill="#fbbc04"/>
                <rect y="27" width="27" height="7" fill="#34a853"/>
                <path d="M27 27h7l-7 7z" fill="#ea4335"/>
                <text x="17" y="23" font-family="Liberation Sans" font-size="15" text-anchor="middle" fill="#4285f4">31</text>
            </svg>
            <svg width="34" height="34" viewBox="0 0 34 34" style="margin-top:66px">
                <rect width="34" height="34" rx="3" fill="#f4bd3e"/>
                <circle cx="17" cy="15" r="7" fill="#fff"/><rect x="13" y="18" width="8" height="4" fill="#fff"/><rect x="14" y="24" width="6" height="2.500" fill="#fff"/>
            </svg>
            <svg width="34" height="34" viewBox="0 0 34 34" style="margin-top:67px">
                <circle cx="16" cy="18" r="13" fill="none" stroke="#3b78e7" stroke-width="5"/>
                <path d="M9 17l6 6L30 4" fill="none" stroke="#4285f4" stroke-width="5"/>
                <path d="M26 9l5-5" stroke="#1a4fb8" stroke-width="5"/>
            </svg>
            <svg width="34" height="34" viewBox="0 0 34 34" style="margin-top:66px">
                <circle cx="17" cy="7" r="6" fill="#1f57c3"/>
                <path d="M6 34c-2-9 2-17 11-17s13 8 11 17z" fill="#7ba3ee"/>
                <path d="M10 34c-1-9 2-17 8-17s10 8 8 17z" fill="#1f57c3"/>
            </svg>
            <div class="rule" style="margin-top:63px"></div>
            <gm-icon name="plus" size="40" style="margin-top:60px;color:#1f1f1f"></gm-icon>
            <gm-icon name="next" size="30" style="margin-top:auto;margin-bottom:7px;color:#1f1f1f"></gm-icon>
        `;
    }
}
customElements.define('side-rail', SideRail);

class GmApp extends HTMLElement{
    constructor(){
        super();
        this.attachShadow({mode: 'open'});
    }
    connectedCallback(){
        this.shadowRoot.innerHTML = `
            <style>
                :host{ display: flex; flex-direction: column; height: 1856px; background: #f6f8fc; }
                .main{ display: flex; flex: none; }
            </style>
            <gm-header></gm-header>
            <div class="main">
                <gm-sidebar></gm-sidebar>
                <mail-thread></mail-thread>
                <side-rail></side-rail>
            </div>
        `;
    }
}
customElements.define('gm-app', GmApp);
</script>
</body>
</html>
